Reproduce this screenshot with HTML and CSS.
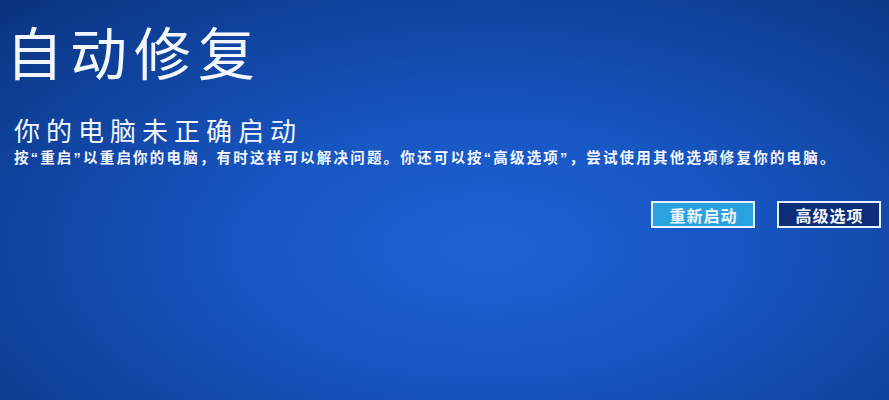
FILE: index.html
```html
<!DOCTYPE html>
<html lang="zh-CN">
<head>
<meta charset="utf-8">
<link rel="stylesheet" href="styles.css">
</head>
<body>
<div class="screen">
  <h1 class="title">自动修复</h1>
  <h2 class="subtitle">你的电脑未正确启动</h2>
  <p class="desc">按“重启”以重启你的电脑，有时这样可以解决问题。你还可以按“高级选项”，尝试使用其他选项修复你的电脑。</p>
  <div class="actions">
    <button class="btn btn-primary">重新启动</button>
    <button class="btn btn-secondary">高级选项</button>
  </div>
</div>
</body>
</html>
```
FILE: styles.css
```css
html, body {
  margin: 0;
  padding: 0;
  width: 889px;
  height: 400px;
  overflow: hidden;
}
body {
  font-family: "Liberation Sans", "Noto Sans CJK SC", sans-serif;
  color: #f2f6ff;
  background: radial-gradient(ellipse 75% 85% at 55% 62%, #1e62d4 0%, #1857c4 35%, #1247a6 65%, #0c3b8d 90%, #0a3480 100%);
}
.screen {
  height: 400px;
  box-sizing: border-box;
  padding: 28px 8px 0 14px;
  display: flex;
  flex-direction: column;
}
.title {
  margin: 0 0 0 -8px;
  font-size: 57px;
  line-height: 54px;
  font-weight: 400;
  letter-spacing: 7px;
}
.subtitle {
  margin: 36px 0 0 0;
  font-size: 26px;
  line-height: 28px;
  font-weight: 400;
  letter-spacing: 6px;
}
.desc {
  margin: 3px 0 0 0;
  font-size: 14.5px;
  line-height: 18px;
  font-weight: 700;
  letter-spacing: 2.2px;
  white-space: nowrap;
}
.actions {
  display: flex;
  justify-content: flex-end;
  gap: 22px;
  margin-top: 34px;
}
.btn {
  width: 104px;
  height: 27px;
  box-sizing: border-box;
  border: 2px solid #e4f2ff;
  font-family: "Liberation Sans", "Noto Sans CJK SC", sans-serif;
  font-size: 16px;
  font-weight: 700;
  letter-spacing: 1px;
  color: #f4f8ff;
  padding: 0 0 0 1px;
  display: flex;
  align-items: center;
  justify-content: center;
}
.btn-primary {
  background: #2aa2e2;
}
.btn-secondary {
  background: #0c2d7a;
}
```
